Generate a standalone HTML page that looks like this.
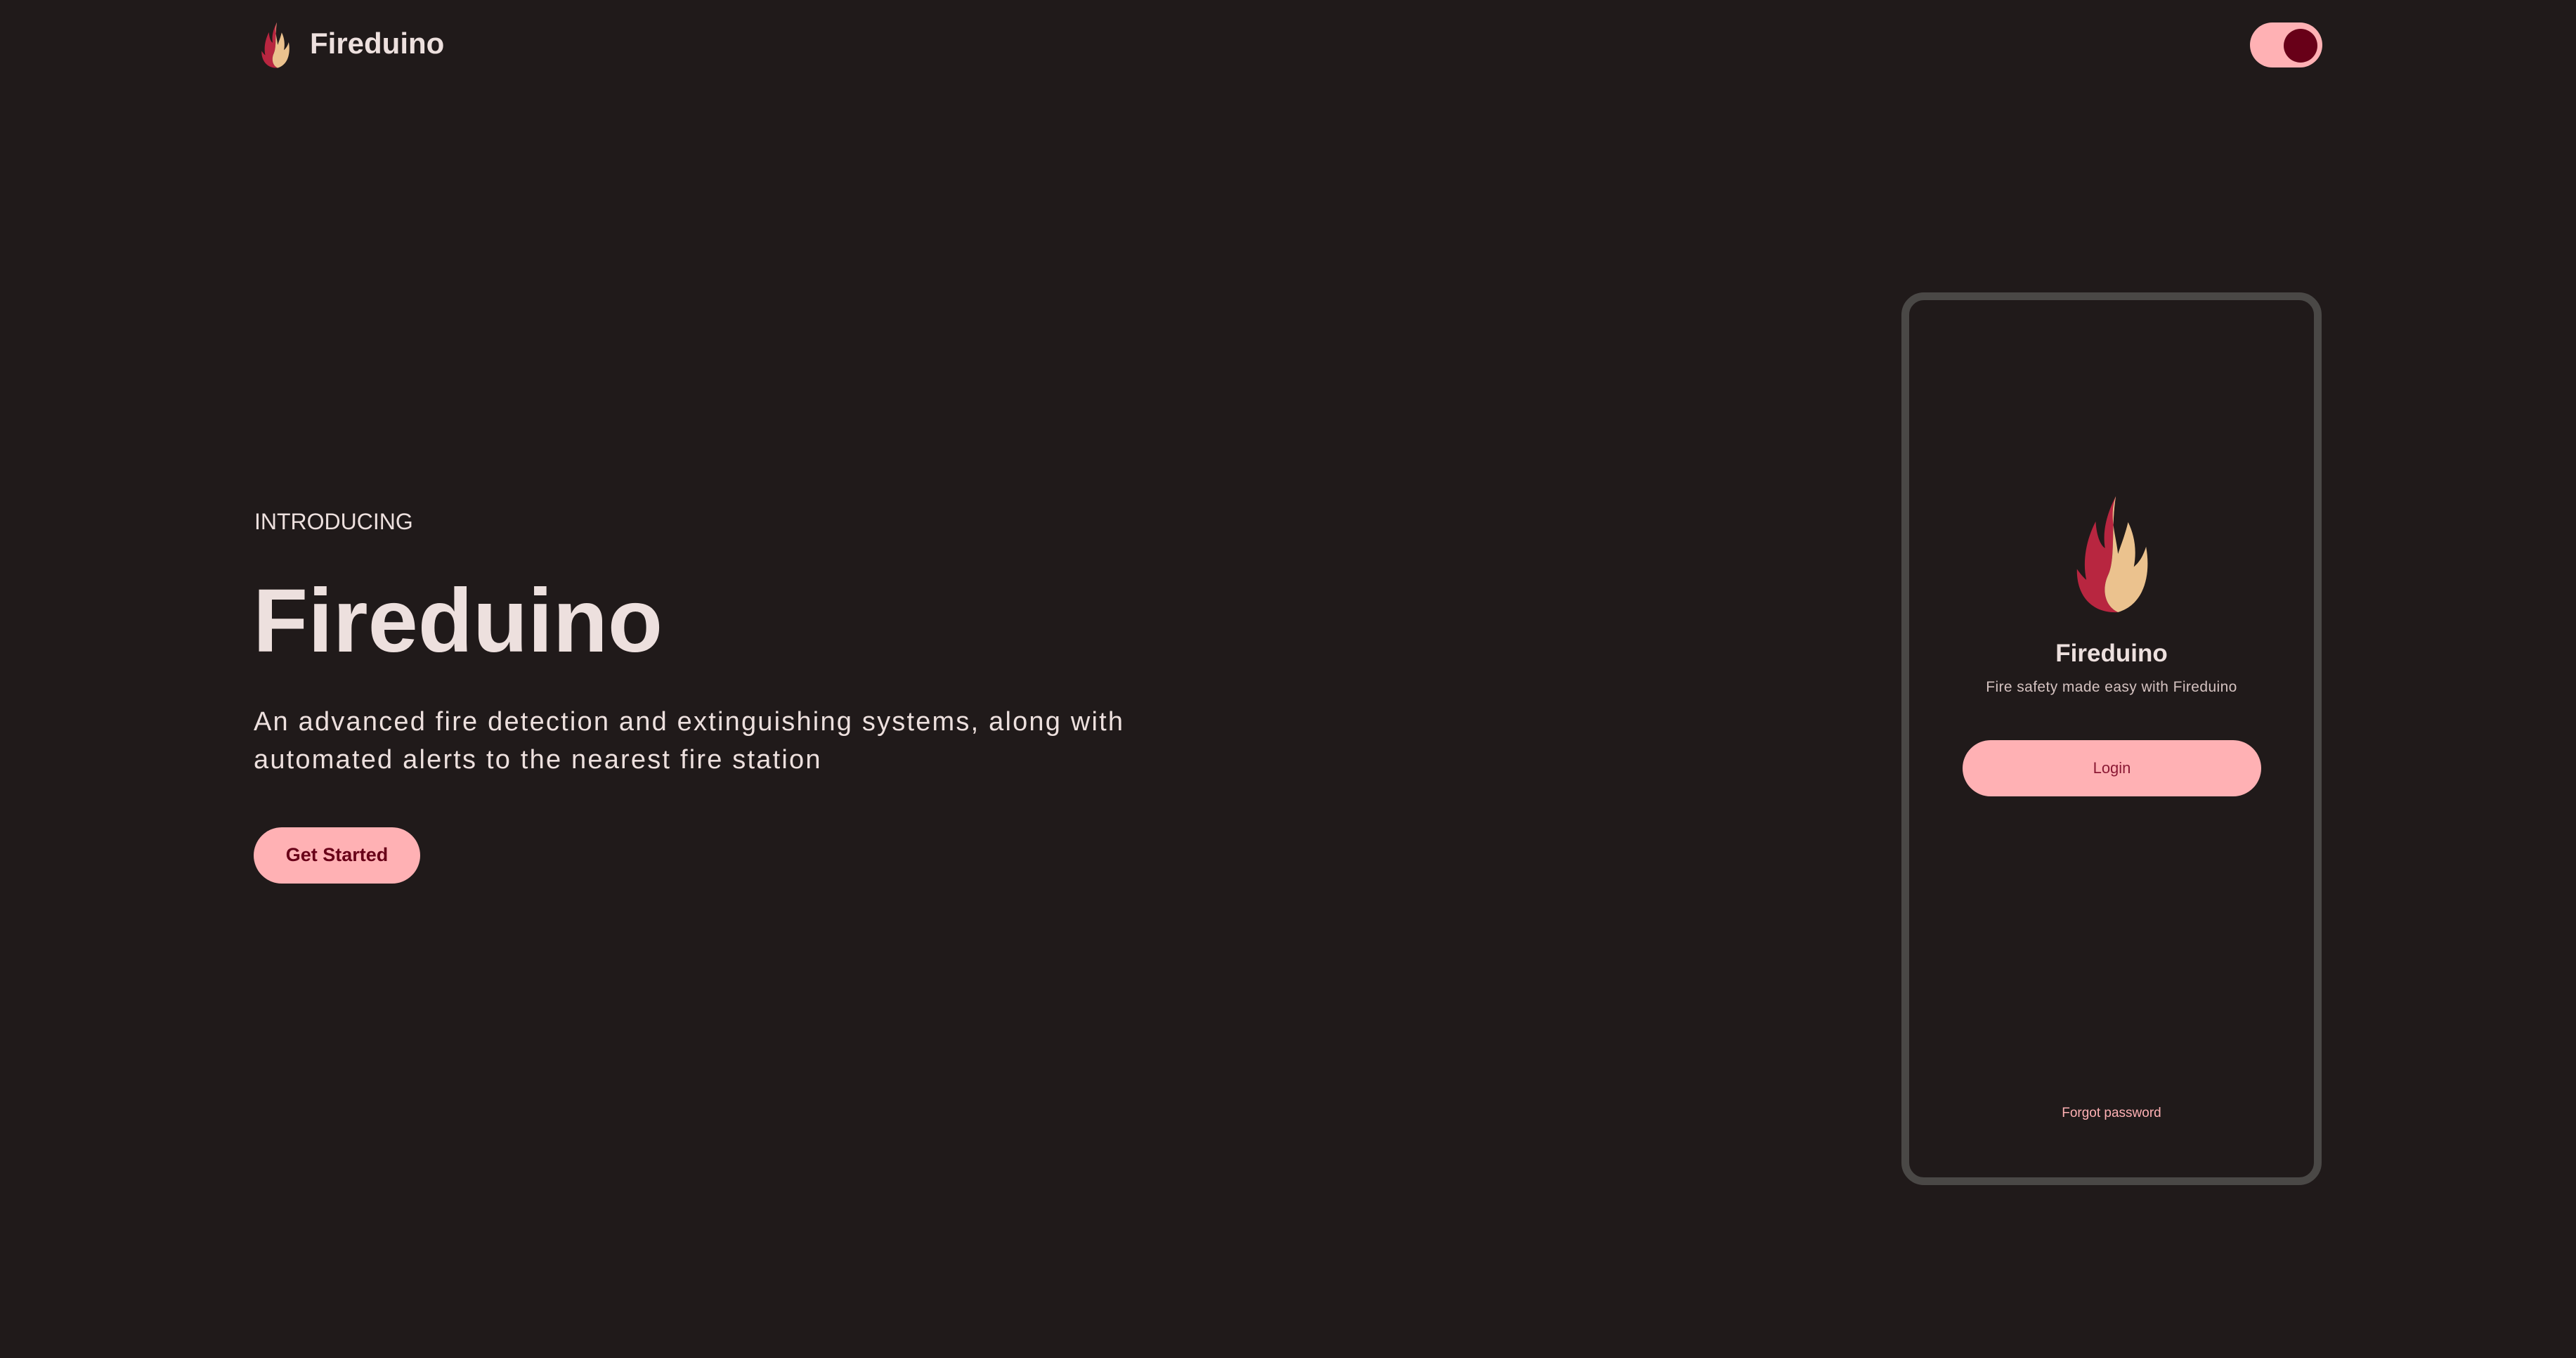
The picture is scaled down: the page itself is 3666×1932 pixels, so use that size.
<!DOCTYPE html>
<html><head><meta charset="utf-8"><style>
html,body{margin:0;padding:0;}
body{width:3666px;height:1932px;background:#201a1a;position:relative;overflow:hidden;font-family:"Liberation Sans",sans-serif;color:#ede0de;}
.abs{position:absolute;}
</style></head><body>
<svg class="abs" style="left:369px;top:31px" width="46" height="66" viewBox="0 0 100 164">
<path fill="#b82640" d="M55,2 C48,45 55,90 44,112 C35,132 40,155 58,163 C22,165 0,140 1,103 C6,110 10,115 14,118 C8,90 15,60 27,37 C28,55 33,70 40,74 C36,50 43,25 55,2 Z"/>
<path fill="#ebc28e" d="M55,2 C45,30 55,55 58,82 C62,70 68,55 72,38 C82,58 84,80 80,100 C86,95 92,88 97,72 C104,110 95,152 58,163 C40,155 35,132 44,112 C55,90 48,45 55,2 Z"/>
</svg>
<div class="abs" style="left:441px;top:37px;font-size:42px;font-weight:bold;line-height:50px;">Fireduino</div>
<div class="abs" style="left:3202px;top:32px;width:103px;height:64px;border-radius:32px;background:#ffb1b4;"></div>
<div class="abs" style="left:3250px;top:41px;width:48px;height:48px;border-radius:50%;background:#680018;"></div>

<div class="abs" style="left:362px;top:722px;font-size:32px;line-height:40px;">INTRODUCING</div>
<div class="abs" style="left:360px;top:809px;font-size:128px;font-weight:bold;line-height:150px;">Fireduino</div>
<div class="abs" style="left:361px;top:1000px;font-size:38px;line-height:54px;letter-spacing:2.2px;width:1400px;">An advanced fire detection and extinguishing systems, along with<br>automated alerts to the nearest fire station</div>
<div class="abs" style="left:361px;top:1177px;width:237px;height:80px;border-radius:40px;background:#ffb1b4;color:#680018;font-size:27px;font-weight:bold;line-height:78px;text-align:center;">Get Started</div>

<div class="abs" style="left:2706px;top:416px;width:576px;height:1248px;border:11px solid #4a4846;border-radius:32px;"></div>
<svg class="abs" style="left:2952px;top:704px" width="108" height="168" viewBox="0 0 100 164">
<path fill="#b82640" d="M55,2 C48,45 55,90 44,112 C35,132 40,155 58,163 C22,165 0,140 1,103 C6,110 10,115 14,118 C8,90 15,60 27,37 C28,55 33,70 40,74 C36,50 43,25 55,2 Z"/>
<path fill="#ebc28e" d="M55,2 C45,30 55,55 58,82 C62,70 68,55 72,38 C82,58 84,80 80,100 C86,95 92,88 97,72 C104,110 95,152 58,163 C40,155 35,132 44,112 C55,90 48,45 55,2 Z"/>
</svg>
<div class="abs" style="left:2706px;width:598px;top:908px;text-align:center;font-size:35px;font-weight:bold;line-height:44px;">Fireduino</div>
<div class="abs" style="left:2706px;width:598px;top:964px;text-align:center;font-size:21px;line-height:28px;letter-spacing:0.4px;color:#d4c2c0;">Fire safety made easy with Fireduino</div>
<div class="abs" style="left:2793px;top:1053px;width:425px;height:80px;border-radius:40px;background:#ffb1b4;color:#8b1a35;font-size:22px;line-height:80px;text-align:center;">Login</div>
<div class="abs" style="left:2706px;width:598px;top:1571px;text-align:center;font-size:19px;line-height:26px;color:#ffb1b4;">Forgot password</div>
</body></html>
